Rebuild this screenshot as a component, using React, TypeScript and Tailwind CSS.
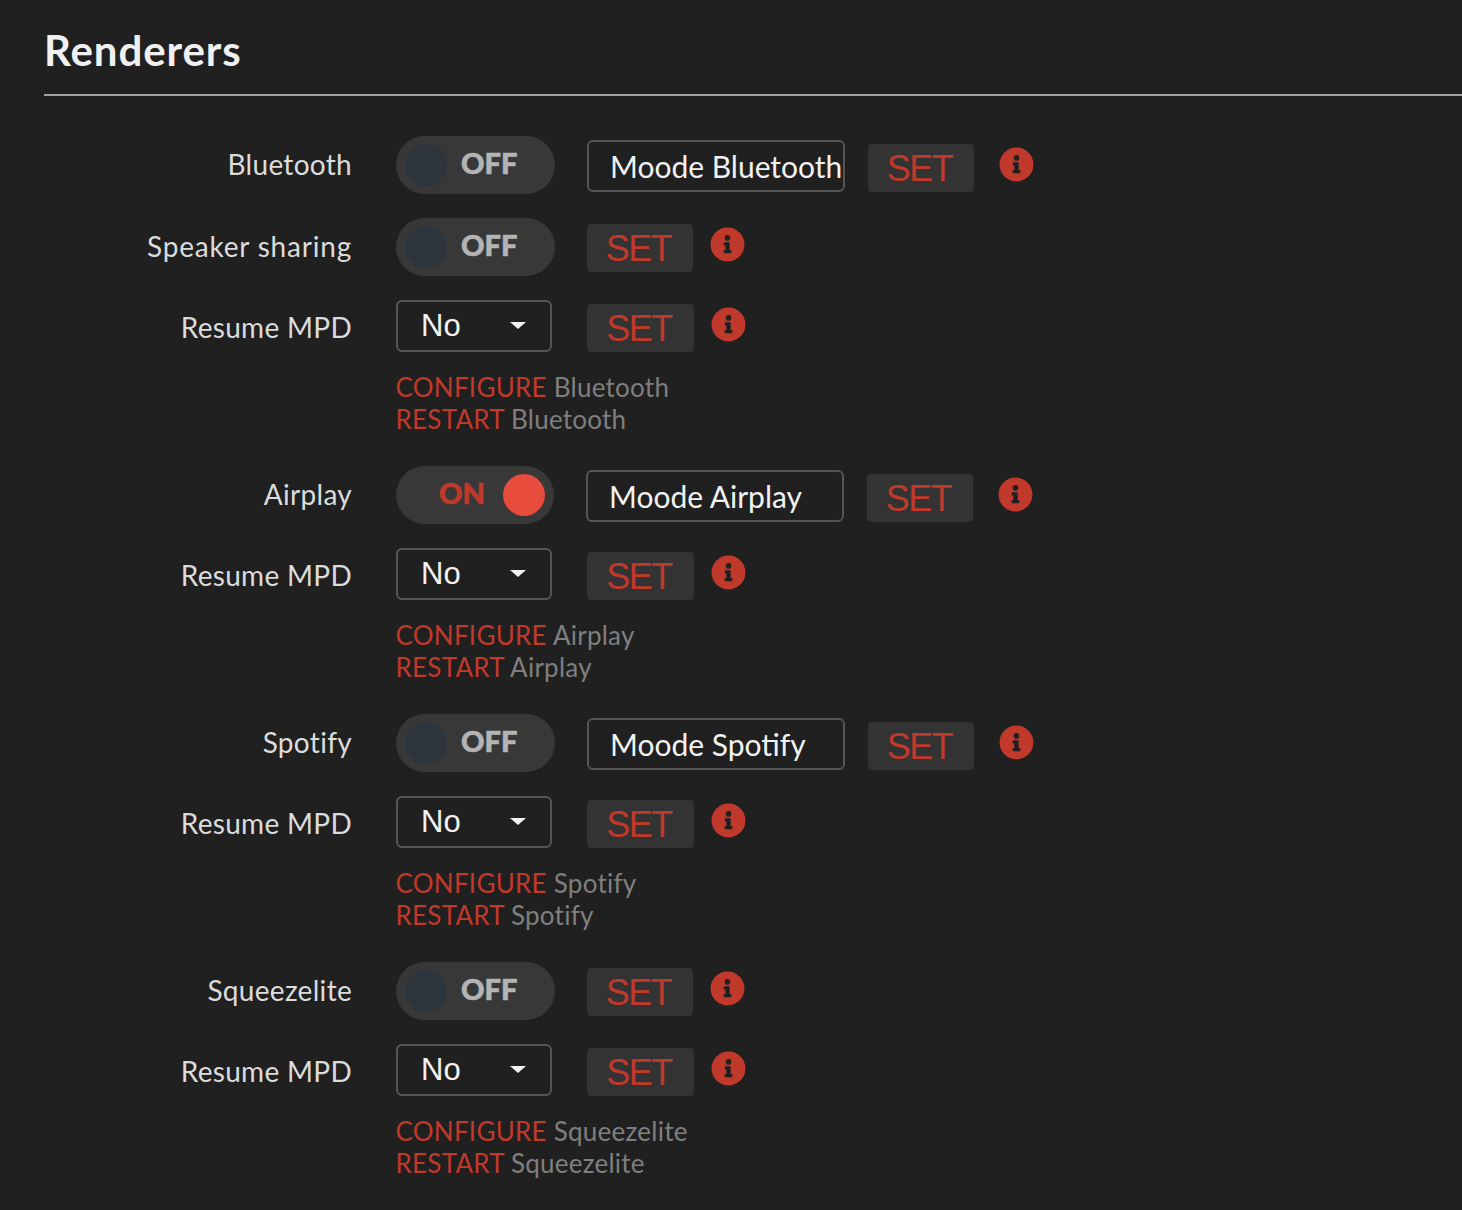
import { FaInfoCircle } from 'react-icons/fa';

const lato = "font-['Lato','Noto_Sans',sans-serif]";

function Label({ text }: { text: string }) {
  const spacing = text === 'Speaker sharing' ? 'tracking-[0.8px]' : 'tracking-[0.3px]';
  return <div className={`w-[308px] shrink-0 text-right text-[28px] leading-[34px] ${spacing} text-[#dcdcdc] ${lato}`}>{text}</div>;
}

function Toggle({ on }: { on: boolean }) {
  return (
    <div className={`relative h-[58px] shrink-0 rounded-[29px] bg-[#383838] ${on ? 'w-[158px]' : 'w-[159px]'}`}>
      {on ? (
        <>
          <span className={`absolute left-[43px] top-[9px] text-[29px] leading-[36px] font-black text-[#c0392b] [-webkit-text-stroke:0.6px_#c0392b] ${lato}`}>ON</span>
          <span className="absolute left-[107px] top-[8px] h-[42px] w-[42px] rounded-full bg-[#e74c3c]" />
        </>
      ) : (
        <>
          <span className="absolute left-[9px] top-[8px] h-[42px] w-[42px] rounded-full bg-[#2c343c]" />
          <span className={`absolute left-[65px] top-[9px] text-[29px] leading-[36px] font-black text-[#b4b4b4] [-webkit-text-stroke:0.6px_#b4b4b4] ${lato}`}>OFF</span>
        </>
      )}
    </div>
  );
}

function SetButton({ top, w = 'w-[106px]' }: { top: string; w?: string }) {
  return (
    <div className={`flex h-[48px] ${w} shrink-0 items-center justify-center rounded-[4px] bg-[#333333] pt-[2px] pr-[3px] font-['Liberation_Sans',sans-serif] text-[36px] tracking-[-1.5px] text-[#c0392b] ${top}`}>
      SET
    </div>
  );
}

function Info({ top }: { top: string }) {
  return <FaInfoCircle className={`shrink-0 text-[35px] text-[#c0392b] ${top}`} />;
}

function NameInput({ value }: { value: string }) {
  return (
    <div className={`mt-[4px] ml-[32px] flex h-[52px] w-[258px] shrink-0 items-center overflow-hidden rounded-[6px] border-2 border-[#555555] bg-[#202020] pl-[21px] text-[30px] whitespace-nowrap text-[#f2f2f2] ${lato}`}>
      {value}
    </div>
  );
}

function ToggleRow({ label, on, name }: { label: string; on: boolean; name?: string }) {
  return (
    <div className="flex h-[82px] items-start">
      <div className="pt-[11px]"><Label text={label} /></div>
      <div className="ml-[44px] flex items-start">
        <Toggle on={on} />
        {name ? (
          <>
            <NameInput value={name} />
            <div className="ml-[23px] flex items-start">
              <SetButton top="mt-[8px]" />
              <div className="ml-[25px]"><Info top="mt-[11px]" /></div>
            </div>
          </>
        ) : (
          <div className="ml-[32px] flex items-start">
            <SetButton top="mt-[6px]" />
            <div className="ml-[17px]"><Info top="mt-[9px]" /></div>
          </div>
        )}
      </div>
    </div>
  );
}

function ResumeRow() {
  return (
    <div className="flex h-[72px] items-start">
      <div className="pt-[10px]"><Label text="Resume MPD" /></div>
      <div className="ml-[44px] flex items-start">
        <div className="relative h-[52px] w-[156px] shrink-0 rounded-[6px] border-2 border-[#555555] bg-[#202020] pl-[23px] font-['Liberation_Sans',sans-serif] text-[31px] leading-[47px] text-[#f2f2f2]">
          No
          <span className="absolute top-[20px] left-[112px] h-0 w-0 border-x-[8px] border-t-[7px] border-x-transparent border-t-[#f2f2f2]" />
        </div>
        <div className="ml-[35px] flex items-start">
          <SetButton top="mt-[4px]" w="w-[107px]" />
          <div className="ml-[17px]"><Info top="mt-[7px]" /></div>
        </div>
      </div>
    </div>
  );
}

function Links({ name }: { name: string }) {
  return (
    <div className={`ml-[351.5px] h-[94px] -translate-y-px text-[26px] leading-[32px] tracking-[0.25px] text-[#7f7f7f] ${lato}`}>
      <div><span className="text-[#c0392b]">CONFIGURE</span> {name}</div>
      <div><span className="text-[#c0392b]">RESTART</span> {name}</div>
    </div>
  );
}

const GROUPS: { label: string; link: string; on: boolean; name?: string; extra?: string }[] = [
  { label: 'Bluetooth', link: 'Bluetooth', on: false, name: 'Moode Bluetooth', extra: 'Speaker sharing' },
  { label: 'Airplay', link: 'Airplay', on: true, name: 'Moode Airplay' },
  { label: 'Spotify', link: 'Spotify', on: false, name: 'Moode Spotify' },
  { label: 'Squeezelite', link: 'Squeezelite', on: false },
];

export default function App() {
  return (
    <div className="h-[1210px] overflow-hidden bg-[#202020] pl-[44px]">
      <div className="h-[96px] border-b-2 border-[#a0a0a0] pt-[24px]">
        <h1 className={`text-[42px] leading-[52px] font-bold tracking-[0.9px] text-[#f0f0f0] ${lato}`}>Renderers</h1>
      </div>
      <div className="pt-[40px]">
        {GROUPS.map(g => (
          <div key={g.label}>
            <ToggleRow label={g.label} on={g.on} name={g.name} />
            {g.extra && <ToggleRow label={g.extra} on={false} />}
            <ResumeRow />
            <Links name={g.link} />
          </div>
        ))}
      </div>
    </div>
  );
}
